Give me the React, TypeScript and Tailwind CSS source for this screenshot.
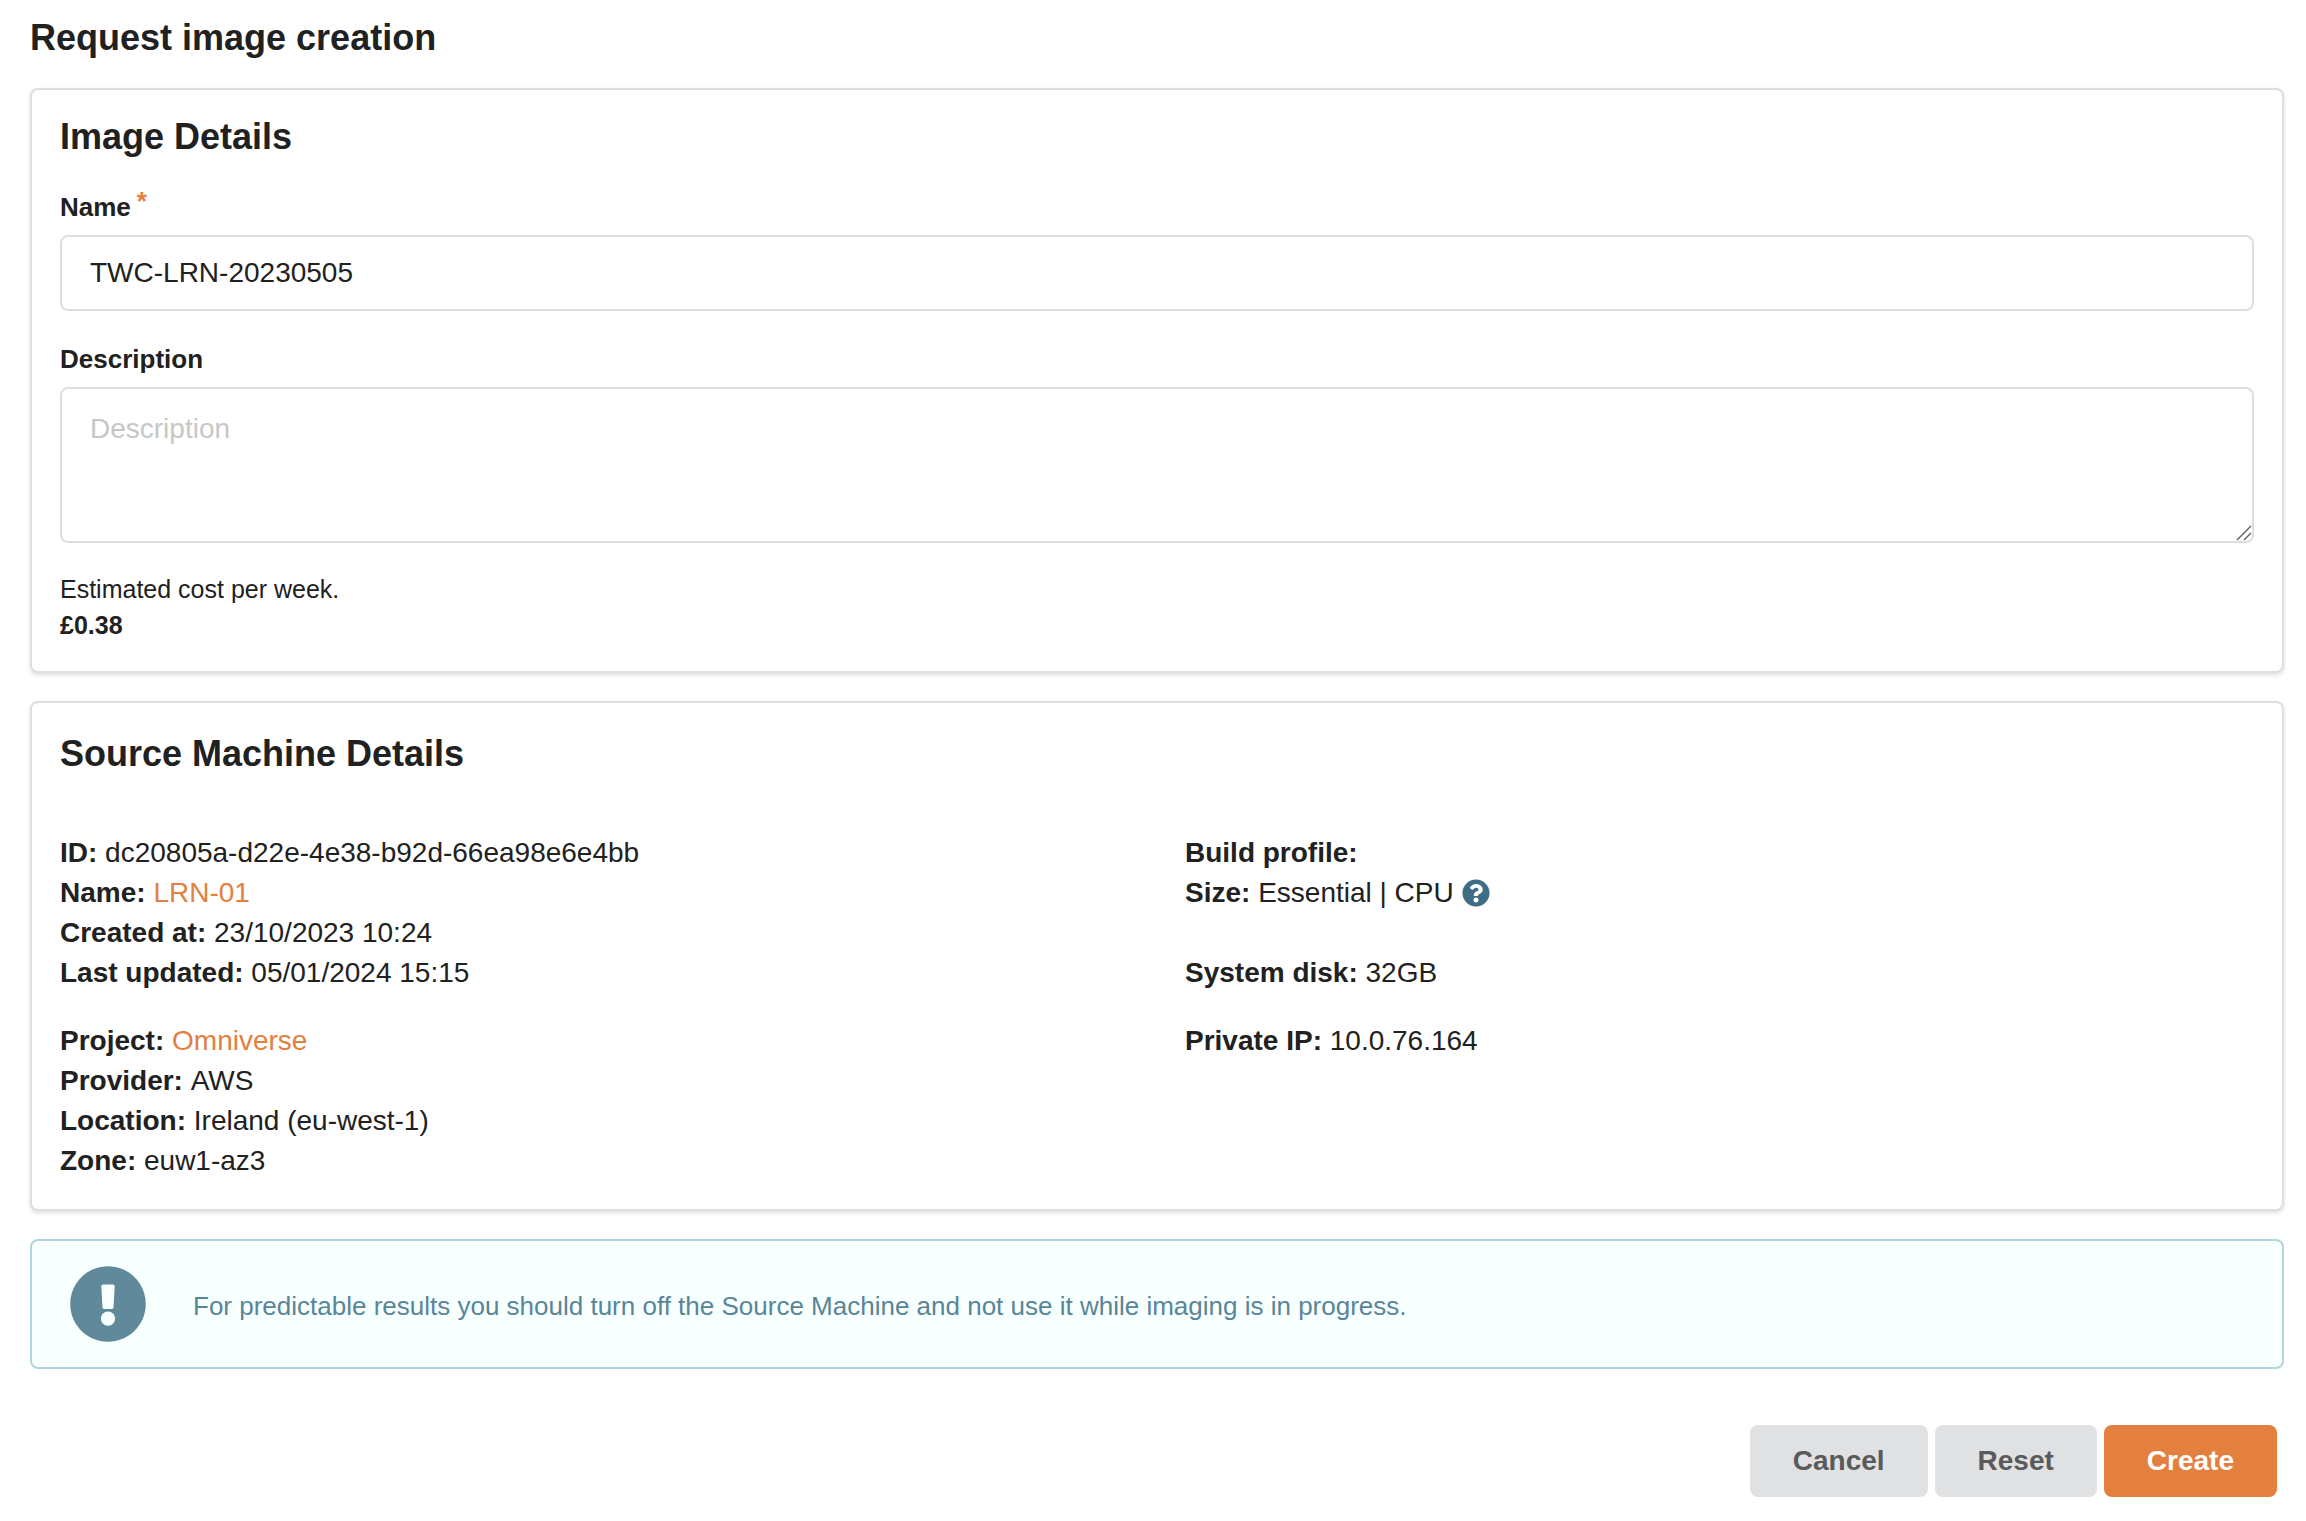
import React, { useState } from 'react';
import { FaExclamationCircle, FaQuestionCircle } from 'react-icons/fa';

interface DetailProps {
  label: string;
  children?: React.ReactNode;
}

// One "Label: value" line of the machine details
const Detail: React.FC<DetailProps> = ({ label, children }) => (
  <div className="min-h-10">
    <dt className="inline font-bold">{label}:</dt> <dd className="inline">{children}</dd>
  </div>
);

interface CardProps {
  title: string;
  children: React.ReactNode;
}

const Card: React.FC<CardProps> = ({ title, children }) => (
  <section className="bg-white border-2 border-[#dededf] rounded-lg px-7 pb-7 shadow-[0_2px_4px_rgba(34,36,38,0.15)]">
    <h2 className="text-4xl leading-[46px] font-bold">{title}</h2>
    {children}
  </section>
);

const DEFAULT_NAME = 'TWC-LRN-20230505';

export default function App() {
  const [name, setName] = useState(DEFAULT_NAME);
  const [description, setDescription] = useState('');

  const handleReset = () => {
    setName(DEFAULT_NAME);
    setDescription('');
  };

  return (
    <form
      className="pl-[30px] pr-[22px] pt-[15px] pb-6 bg-white text-[#212121] text-[28px] leading-10 font-['Helvetica_Neue','Liberation_Sans',Arial,sans-serif]"
      onSubmit={(e) => e.preventDefault()}
    >
      <h1 className="text-4xl leading-[46px] font-bold">Request image creation</h1>

      <div className="mt-[27px] flex flex-col gap-7 [&>section:first-child]:pt-6 [&>section]:pt-7">
        <Card title="Image Details">
          <div className="mt-[27px]">
            <label htmlFor="name" className="block mb-2 text-[26px] leading-10 font-bold">
              Name
              <span className="ml-1.5 align-top leading-7 text-[#e3803f]">*</span>
            </label>
            <input
              id="name"
              type="text"
              value={name}
              onChange={(e) => setName(e.target.value)}
              className="block w-full h-[76px] px-7 border-2 border-[#dededf] rounded-lg bg-white outline-none"
            />
          </div>

          <div className="mt-7">
            <label htmlFor="description" className="block mb-2 text-[26px] leading-10 font-bold">
              Description
            </label>
            <div className="relative">
              <textarea
                id="description"
                placeholder="Description"
                value={description}
                onChange={(e) => setDescription(e.target.value)}
                className="block w-full h-[156px] px-7 py-[22px] leading-9 border-2 border-[#dededf] rounded-lg bg-white outline-none resize-y placeholder:text-[#c7c7c7]"
              />
              {/* Resize grip, drawn over the browser's own */}
              <svg
                className="absolute right-0.5 bottom-0.5 size-4 bg-white rounded-br-md pointer-events-none"
                viewBox="0 0 16 16"
                stroke="#5c5c5c"
                strokeWidth="1.4"
                aria-hidden="true"
              >
                <path d="M1 15L15 1M8 15l7-7" />
              </svg>
            </div>
          </div>

          <div className="mt-7 text-[25px] leading-9">
            <p>Estimated cost per week.</p>
            <p className="font-bold">£0.38</p>
          </div>
        </Card>

        <Card title="Source Machine Details">
          <div className="mt-14 grid grid-cols-2 gap-x-14 gap-y-7">
            <dl>
              <Detail label="ID">dc20805a-d22e-4e38-b92d-66ea98e6e4bb</Detail>
              <Detail label="Name">
                <a href="#machine" className="text-[#e3803f]">LRN-01</a>
              </Detail>
              <Detail label="Created at">23/10/2023 10:24</Detail>
              <Detail label="Last updated">05/01/2024 15:15</Detail>
            </dl>
            <dl className="flex flex-col">
              <Detail label="Build profile" />
              <Detail label="Size">
                Essential | CPU
                <FaQuestionCircle className="inline ml-2 mb-1 size-7 text-[#3d6e86]" />
              </Detail>
              <div className="mt-auto">
                <Detail label="System disk">32GB</Detail>
              </div>
            </dl>
            <dl>
              <Detail label="Project">
                <a href="#project" className="text-[#e3803f]">Omniverse</a>
              </Detail>
              <Detail label="Provider">AWS</Detail>
              <Detail label="Location">Ireland (eu-west-1)</Detail>
              <Detail label="Zone">euw1-az3</Detail>
            </dl>
            <dl>
              <Detail label="Private IP">10.0.76.164</Detail>
            </dl>
          </div>
        </Card>

        <div className="flex items-center gap-[46px] min-h-[130px] px-[37px] border-2 border-[#b0d5de] rounded-lg bg-[#f8ffff] text-[#588699]">
          <FaExclamationCircle className="size-[78px] shrink-0 text-[#608a9c]" />
          <p className="pt-1 text-[26px]">
            For predictable results you should turn off the Source Machine and not use it while imaging is in progress.
          </p>
        </div>
      </div>

      <div className="mt-14 pr-[7px] flex justify-end gap-[7px] font-bold">
        <button type="button" className="px-[43px] py-4 rounded-lg bg-[#e0e1e2] text-[#5a5a5a]">Cancel</button>
        <button type="button" onClick={handleReset} className="px-[43px] py-4 rounded-lg bg-[#e0e1e2] text-[#5a5a5a]">Reset</button>
        <button type="submit" className="px-[43px] py-4 rounded-lg bg-[#e3803f] text-white">Create</button>
      </div>
    </form>
  );
}
